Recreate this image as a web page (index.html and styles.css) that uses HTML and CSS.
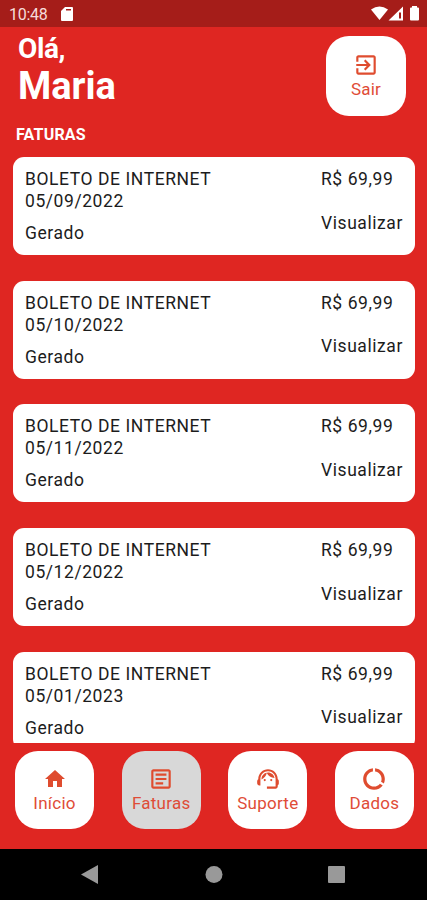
FILE: index.html
```html
<!DOCTYPE html>
<html lang="pt-BR">
<head>
    <meta charset="UTF-8">
    <meta name="viewport" content="width=device-width, initial-scale=1">
    <title>Faturas</title>
    <link rel="stylesheet" href="styles.css">
</head>
<body>
    <div class="status">
        <span class="hora">10:48</span>
        <svg class="sd" viewBox="0 0 12 14"><path fill-rule="evenodd" d="M4 0h7q1 0 1 1v12q0 1-1 1H1q-1 0-1-1V4zM5 2v1.500h5V2z"/></svg>
        <svg class="sinais" viewBox="0 0 50 16">
            <path d="M0 3.500Q8.500-2.500 17 3.500L8.500 14z"/>
            <path fill-rule="evenodd" d="M17.500 14.500L32 .5v14zM28 6.500v6h2v-6z"/>
            <path d="M41 1.500V0h5v1.500h1q1 0 1 1v11q0 1-1 1h-7q-1 0-1-1v-11q0-1 1-1z"/>
        </svg>
    </div>
    <header class="topo">
        <h1><span>Olá,</span>Maria</h1>
        <button class="btn sair">
            <svg viewBox="0 0 24 24"><path d="M10.090 15.590L11.500 17l5-5-5-5-1.410 1.410L12.670 11H3v2h9.670l-2.580 2.590zM19 3H5c-1.110 0-2 .9-2 2v4h2V5h14v14H5v-4H3v4c0 1.100.89 2 2 2h14c1.100 0 2-.9 2-2V5c0-1.100-.9-2-2-2z"/></svg>
            <span>Sair</span>
        </button>
    </header>
    <h2>FATURAS</h2>
    <main class="lista">
        <div class="fatura">
            <div class="info">
                <p>BOLETO DE INTERNET</p>
                <p>05/09/2022</p>
                <p class="situacao">Gerado</p>
            </div>
            <div class="valor">
                <p>R$ 69,99</p>
                <p class="ver">Visualizar</p>
            </div>
        </div>
        <div class="fatura">
            <div class="info">
                <p>BOLETO DE INTERNET</p>
                <p>05/10/2022</p>
                <p class="situacao">Gerado</p>
            </div>
            <div class="valor">
                <p>R$ 69,99</p>
                <p class="ver">Visualizar</p>
            </div>
        </div>
        <div class="fatura">
            <div class="info">
                <p>BOLETO DE INTERNET</p>
                <p>05/11/2022</p>
                <p class="situacao">Gerado</p>
            </div>
            <div class="valor">
                <p>R$ 69,99</p>
                <p class="ver">Visualizar</p>
            </div>
        </div>
        <div class="fatura">
            <div class="info">
                <p>BOLETO DE INTERNET</p>
                <p>05/12/2022</p>
                <p class="situacao">Gerado</p>
            </div>
            <div class="valor">
                <p>R$ 69,99</p>
                <p class="ver">Visualizar</p>
            </div>
        </div>
        <div class="fatura">
            <div class="info">
                <p>BOLETO DE INTERNET</p>
                <p>05/01/2023</p>
                <p class="situacao">Gerado</p>
            </div>
            <div class="valor">
                <p>R$ 69,99</p>
                <p class="ver">Visualizar</p>
            </div>
        </div>
    </main>
    <nav class="menu">
        <button class="btn inicio">
            <svg viewBox="0 0 24 24"><path d="M10 20v-6h4v6h5v-8h3L12 3 2 12h3v8z"/></svg>
            <span>Início</span>
        </button>
        <button class="btn ativo">
            <svg viewBox="0 0 24 24"><path d="M19 5v14H5V5h14m0-2H5c-1.100 0-2 .9-2 2v14c0 1.100.9 2 2 2h14c1.100 0 2-.9 2-2V5c0-1.100-.9-2-2-2zM14 17H7v-2h7v2zm3-4H7v-2h10v2zm0-4H7V7h10v2z"/></svg>
            <span>Faturas</span>
        </button>
        <button class="btn">
            <svg viewBox="0 0 24 24">
                <path d="M21 12.220C21 6.730 16.740 3 12 3c-4.690 0-9 3.650-9 9.280-.6.34-1 .98-1 1.720v2c0 1.100.9 2 2 2h1v-6.100c0-3.870 3.130-7 7-7s7 3.130 7 7V19h-8v2h8c1.100 0 2-.9 2-2v-1.220c.59-.31 1-.92 1-1.640v-2.300c0-.7-.41-1.310-1-1.620z"/>
                <circle cx="9" cy="13" r="1"/>
                <circle cx="15" cy="13" r="1"/>
                <path d="M18 11.030C17.520 8.180 15.040 6 12.050 6c-3.030 0-6.290 2.510-6.030 6.450 2.470-1.010 4.330-3.210 4.860-5.890 1.310 2.630 4 4.440 7.120 4.470z"/>
            </svg>
            <span>Suporte</span>
        </button>
        <button class="btn">
            <svg viewBox="0 0 24 24"><path d="M13 2.050v3.030c3.390.49 6 3.390 6 6.920 0 .9-.18 1.750-.48 2.540l2.600 1.530c.56-1.240.88-2.620.88-4.070 0-5.180-3.950-9.450-9-9.950zM12 19c-3.870 0-7-3.130-7-7 0-3.530 2.610-6.430 6-6.920V2.050c-5.060.5-9 4.760-9 9.950 0 5.520 4.470 10 9.990 10 3.310 0 6.240-1.610 8.060-4.090l-2.600-1.530C16.170 17.980 14.210 19 12 19z"/></svg>
            <span>Dados</span>
        </button>
    </nav>
    <div class="sistema">
        <svg viewBox="0 0 427 51">
            <path d="M81 25.500L98 16v19z"/>
            <circle cx="214" cy="25.500" r="8.500"/>
            <rect x="328" y="17" width="17" height="17" rx="1"/>
        </svg>
    </div>
</body>
</html>
```
FILE: styles.css
```css
* {
    box-sizing: border-box;
    margin: 0;
    padding: 0;
}

body {
    display: flex;
    flex-direction: column;
    height: 900px;
    background: #df2622;
    font-family: Roboto, sans-serif;
    overflow: hidden;
}

.status {
    display: flex;
    align-items: center;
    flex: none;
    height: 27px;
    padding: 0 7px 0 9px;
    background: #a51d19;
    color: #f6dcdb;
    font-size: 16px;
    letter-spacing: -.3px;
}

.status svg {
    fill: #fff;
}

.hora {
    width: 52px;
    padding-top: 1px;
}

.sd {
    width: 12px;
    height: 14px;
}

.sinais {
    width: 50px;
    height: 16px;
    margin-left: auto;
    margin-right: -1px;
}

.topo {
    display: flex;
    justify-content: space-between;
    flex: none;
    height: 97px;
    padding: 9px 21px 0 18px;
    color: #fff;
}

h1 {
    margin-top: -2px;
    font-size: 38px;
    line-height: 42px;
}

h1 span {
    display: block;
    height: 31px;
    font-size: 28px;
    line-height: 29px;
    letter-spacing: -.4px;
}

h2 {
    flex: none;
    height: 33px;
    padding-left: 16px;
    color: #fff;
    font-size: 16px;
    line-height: 21px;
    letter-spacing: .2px;
}

.btn {
    display: flex;
    flex-direction: column;
    align-items: center;
    width: 79px;
    height: 78px;
    padding-top: 15px;
    border: none;
    border-radius: 23px;
    background: #fff;
    color: #df4c37;
    font-family: inherit;
    font-size: 17px;
    letter-spacing: .25px;
}

.btn svg {
    width: 26px;
    height: 26px;
    fill: #df4c2f;
}

.btn span {
    line-height: 22px;
}

.sair {
    width: 80px;
    height: 80px;
    padding-top: 16px;
}

.inicio svg {
    width: 24px;
    height: 24px;
    margin: 1px 0;
}

.lista {
    flex: none;
    height: 586px;
    padding: 0 12px 0 13px;
    border-radius: 0 0 3px 3px;
    overflow: hidden;
}

.fatura {
    display: flex;
    justify-content: space-between;
    height: 98px;
    margin-bottom: 25.7px;
    padding: 11px 0 0 12px;
    border-radius: 11px;
    background: #fff;
    color: #1c1c1c;
    font-size: 17.5px;
    line-height: 22px;
    letter-spacing: .57px;
}

.valor {
    width: 94px;
}

.situacao {
    margin-top: 10px;
}

.ver {
    margin-top: 21.5px;
}

.menu {
    display: flex;
    justify-content: space-between;
    flex: none;
    height: 106px;
    padding: 8px 13px 0 15px;
}

.ativo {
    background: #d8d8d8;
}

.sistema {
    flex: none;
    height: 51px;
    background: #000;
}

.sistema svg {
    display: block;
    width: 427px;
    height: 51px;
    fill: #999;
}
```
